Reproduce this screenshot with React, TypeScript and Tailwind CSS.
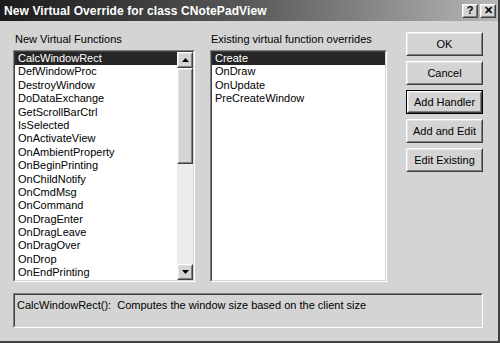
import React from "react";

const functions = [
  "CalcWindowRect",
  "DefWindowProc",
  "DestroyWindow",
  "DoDataExchange",
  "GetScrollBarCtrl",
  "IsSelected",
  "OnActivateView",
  "OnAmbientProperty",
  "OnBeginPrinting",
  "OnChildNotify",
  "OnCmdMsg",
  "OnCommand",
  "OnDragEnter",
  "OnDragLeave",
  "OnDragOver",
  "OnDrop",
  "OnEndPrinting",
];

const overrides = ["Create", "OnDraw", "OnUpdate", "PreCreateWindow"];

const Raised: React.FC<{ className?: string; children?: React.ReactNode }> = ({ className = "", children }) => (
  <div className={`border border-t-white border-l-white border-r-[#404040] border-b-[#404040] ${className}`}>
    <div className="w-full h-full border border-t-[#e4e4e4] border-l-[#e4e4e4] border-r-[#808080] border-b-[#808080] flex items-center justify-center bg-[#d4d4d4]">
      {children}
    </div>
  </div>
);

const Sunken: React.FC<{ className?: string; inner?: string; children?: React.ReactNode }> = ({
  className = "",
  inner = "bg-white",
  children,
}) => (
  <div className={`border border-t-[#808080] border-l-[#808080] border-r-white border-b-white ${className}`}>
    <div className={`w-full h-full border border-t-[#404040] border-l-[#404040] border-r-[#d4d4d4] border-b-[#d4d4d4] ${inner}`}>
      {children}
    </div>
  </div>
);

const Arrow: React.FC<{ up?: boolean }> = ({ up }) => (
  <svg width="7" height="4" viewBox="0 0 7 4">
    {up ? <polygon points="3.5,0 7,4 0,4" fill="#000" /> : <polygon points="0,0 7,0 3.5,4" fill="#000" />}
  </svg>
);

const Row: React.FC<{ text: string; selected?: boolean }> = ({ text, selected }) => (
  <div
    className={`h-[13.4px] leading-[13.4px] pl-[3px] whitespace-nowrap ${
      selected ? "bg-[#262626] text-white" : "text-black"
    }`}
  >
    {text}
  </div>
);

const Button: React.FC<{ label: string; isDefault?: boolean }> = ({ label, isDefault }) =>
  isDefault ? (
    <div className="w-[77px] h-[24px] border border-black">
      <Raised className="w-full h-full">
        <span>{label}</span>
      </Raised>
    </div>
  ) : (
    <Raised className="w-[77px] h-[24px]">
      <span>{label}</span>
    </Raised>
  );

export default function App() {
  return (
    <div
      className="w-[500px] h-[343px] bg-[#d4d4d4] border-r-2 border-b-2 border-r-[#404040] border-b-[#404040] text-[11px] text-black overflow-hidden flex flex-col"
      style={{ fontFamily: '"Liberation Sans", Arial, sans-serif' }}
    >
      {/* title bar */}
      <div className="h-[21px] shrink-0 flex items-center justify-between pl-[4px] pr-[2px] bg-gradient-to-r from-[#1c1c1c] via-[#5a5a5a] to-[#b8b8b8]">
        <span className="text-white font-bold text-[12px] tracking-[0.1px]">
          New Virtual Override for class CNotePadView
        </span>
        <div className="flex gap-[2px]">
          <Raised className="w-[16px] h-[14px]">
            <span className="font-bold text-[11px] leading-none">?</span>
          </Raised>
          <Raised className="w-[16px] h-[14px]">
            <span className="font-bold text-[11px] leading-none">✕</span>
          </Raised>
        </div>
      </div>

      <div className="flex-1 flex flex-col pl-[13px] pr-[13px] pt-[11px]">
        <div className="flex">
          {/* left list */}
          <div className="w-[182px] flex flex-col">
            <div className="h-[18px] leading-[14px] pl-[2px]">New Virtual Functions</div>
            <Sunken className="w-[182px] h-[232px]">
              <div className="flex h-full">
                <div className="flex-1 overflow-hidden">
                  {functions.map((f, i) => (
                    <Row key={f} text={f} selected={i === 0} />
                  ))}
                </div>
                <div className="w-[16px] h-full flex flex-col bg-[#ececec]">
                  <Raised className="w-[16px] h-[16px]">
                    <Arrow up />
                  </Raised>
                  <Raised className="w-[16px] h-[96px]" />
                  <div className="flex-1" />
                  <Raised className="w-[16px] h-[16px]">
                    <Arrow />
                  </Raised>
                </div>
              </div>
            </Sunken>
          </div>

          {/* right list */}
          <div className="w-[177px] ml-[15px] flex flex-col">
            <div className="h-[18px] leading-[14px] pl-[1px]">Existing virtual function overrides</div>
            <Sunken className="w-[177px] h-[232px]">
              <div>
                {overrides.map((f, i) => (
                  <Row key={f} text={f} selected={i === 0} />
                ))}
              </div>
            </Sunken>
          </div>

          {/* buttons */}
          <div className="ml-[19px] flex flex-col gap-[5px]">
            <Button label="OK" />
            <Button label="Cancel" />
            <Button label="Add Handler" isDefault />
            <Button label="Add and Edit" />
            <Button label="Edit Existing" />
          </div>
        </div>

        {/* description */}
        <Sunken className="mt-[11px] w-[470px] h-[35px]" inner="bg-[#d4d4d4]">
          <div className="pl-[2px] pt-[3px] leading-[14px]">
            CalcWindowRect():&nbsp; Computes the window size based on the client size
          </div>
        </Sunken>
      </div>
    </div>
  );
}
